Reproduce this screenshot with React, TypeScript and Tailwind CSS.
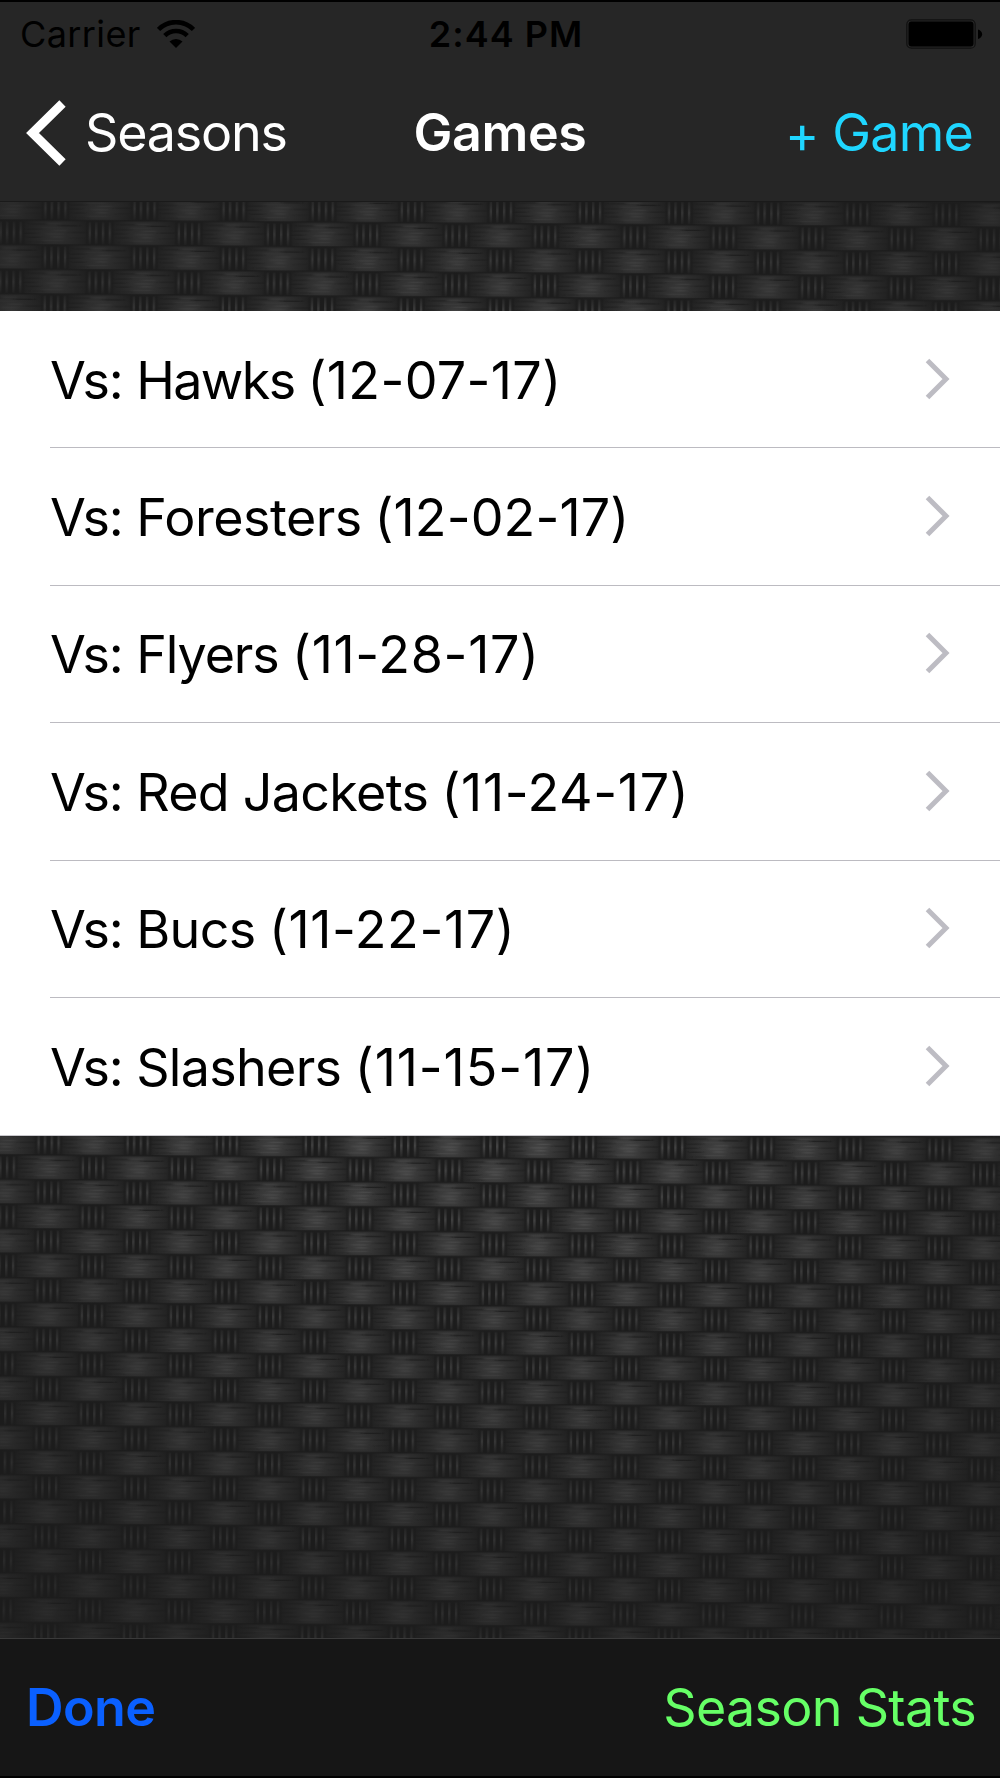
const games = [
  { id: 1, opponent: 'Hawks', date: '12-07-17', nameTracking: 'tracking-[-1.6px]', dateTracking: 'tracking-[0.35px]' },
  { id: 2, opponent: 'Foresters', date: '12-02-17', nameTracking: 'tracking-[-0.5px]', dateTracking: 'tracking-[0.1px]' },
  { id: 3, opponent: 'Flyers', date: '11-28-17', nameTracking: 'tracking-[-1.1px]', dateTracking: 'tracking-[0.7px]' },
  { id: 4, opponent: 'Red Jackets', date: '11-24-17', nameTracking: 'tracking-[-0.7px]', dateTracking: 'tracking-[0.65px]' },
  { id: 5, opponent: 'Bucs', date: '11-22-17', nameTracking: 'tracking-[-0.6px]', dateTracking: 'tracking-[0.6px]' },
  { id: 6, opponent: 'Slashers', date: '11-15-17', nameTracking: 'tracking-[-0.7px]', dateTracking: 'tracking-[0.9px]' },
];

// [dx, dy, length, opacity, light?] of the fibres on one strand
const fibres: [number, number, number, number, boolean][] = [
  [-26, 3, 18, 0.4, false],
  [-8, 2.5, 14, 0.5, true],
  [4, 4.5, 20, 0.7, false],
  [-14, 6.5, 20, 0.4, true],
  [-30, 8, 16, 0.4, false],
  [-2, 9.5, 13, 0.7, true],
  [-34, 12, 16, 0.4, false],
  [14, 11.5, 20, 0.4, false],
  [-8, 13, 16, 0.7, true],
  [-28, 16, 14, 0.4, false],
  [-3, 16, 10, 0.9, true],
  [16, 17, 18, 0.4, false],
  [-12, 19.5, 20, 0.5, true],
  [-24, 21, 12, 0.4, false],
];

function Strand({ x, y }: { x: number; y: number }) {
  return (
    <g transform={`translate(${x} ${y})`}>
      <rect x="-44" y="0.5" width="88" height="24" fill="url(#strand)" />
      <g filter="url(#soften)">
        {fibres.map(([dx, dy, len, opacity, light], i) => (
          <rect key={i} x={dx} y={dy} width={len} height="1.3" fill={light ? '#565656' : '#181818'} opacity={opacity} />
        ))}
      </g>
      <rect x="-34" y="23.6" width="68" height="1.4" fill="#181818" opacity="0.6" />
    </g>
  );
}

function Cross({ x, y }: { x: number; y: number }) {
  return (
    <g transform={`translate(${x} ${y})`}>
      <rect x="-14" y="1" width="28" height="23" fill="#1b1b1b" opacity="0.5" />
      {[-10, -3.6, 3.2, 10].map(dx => (
        <rect key={dx} x={dx - 1.2} y="1.5" width="2.4" height="22" fill="url(#cord)" />
      ))}
    </g>
  );
}

function WovenBackground() {
  return (
    <svg className="absolute inset-0" width="1000" height="1778" viewBox="0 0 1000 1778">
      <defs>
        <filter id="soften" x="-20%" y="-20%" width="140%" height="140%">
          <feGaussianBlur stdDeviation="2 0.6" />
        </filter>
        <radialGradient id="strand" gradientUnits="userSpaceOnUse" cx="0" cy="0" r="1" gradientTransform="translate(0 14) scale(38 30)">
          <stop offset="0" stopColor="#484848" />
          <stop offset="0.4" stopColor="#393939" />
          <stop offset="0.75" stopColor="#2a2a2a" />
          <stop offset="1" stopColor="#1d1d1d" />
        </radialGradient>
        <linearGradient id="cord" x1="0" y1="0" x2="0" y2="1">
          <stop offset="0" stopColor="#292929" />
          <stop offset="0.5" stopColor="#474747" />
          <stop offset="1" stopColor="#252525" />
        </linearGradient>
        <radialGradient id="shade" gradientUnits="userSpaceOnUse" cx="0" cy="0" r="1" gradientTransform="translate(500 840) scale(1000 1000)">
          <stop offset="0" stopColor="#1c1c1c" stopOpacity="0" />
          <stop offset="0.3" stopColor="#1c1c1c" stopOpacity="0.04" />
          <stop offset="0.6" stopColor="#1c1c1c" stopOpacity="0.38" />
          <stop offset="0.8" stopColor="#1c1c1c" stopOpacity="0.62" />
          <stop offset="1" stopColor="#1c1c1c" stopOpacity="0.8" />
        </radialGradient>
        <pattern id="weave" patternUnits="userSpaceOnUse" x="12.4" y="-1.4" width="89.1" height="49.2" patternTransform="rotate(0.42)">
          <rect width="90" height="50" fill="#1d1d1d" />
          <Strand x={0} y={0} />
          <Strand x={89.1} y={0} />
          <Strand x={44.55} y={24.6} />
          <Cross x={44.55} y={0} />
          <Cross x={0} y={24.6} />
          <Cross x={89.1} y={24.6} />
        </pattern>
      </defs>
      <rect width="1000" height="1778" fill="url(#weave)" />
      <rect width="1000" height="1778" fill="url(#shade)" />
    </svg>
  );
}

function StatusBar() {
  return (
    <div className="flex h-[63px] items-center justify-between pl-5 pr-[17px] text-black">
      <div className="flex w-[409px] items-center gap-4">
        <span className="text-[36px] leading-none tracking-[0.4px]">Carrier</span>
        <svg width="38" height="28" viewBox="0 0 38 28" fill="none" stroke="currentColor">
          <path d="M1.5 9.5a24.5 24.5 0 0 1 35 0" strokeWidth="4.6" />
          <path d="M7.8 15.6a16 16 0 0 1 22.4 0" strokeWidth="4.6" />
          <path d="M19 28l-6.5-6.5a9.5 9.5 0 0 1 13 0z" fill="currentColor" stroke="none" />
        </svg>
      </div>
      <span className="shrink-0 whitespace-nowrap text-[36px] font-semibold leading-none tracking-[1px]">2:44 PM</span>
      <div className="flex w-[400px] justify-end">
        <svg width="77" height="30" viewBox="0 0 77 30">
          <rect x="0.8" y="0.8" width="68.4" height="28.4" rx="4.5" fill="none" stroke="#111" strokeWidth="1.2" />
          <rect x="2.5" y="2.5" width="65" height="25" rx="3" />
          <path d="M72 10.5c5.5 1.500 5.500 8 0 9.500z" />
        </svg>
      </div>
    </div>
  );
}

function NavBar() {
  return (
    <div className="flex flex-1 items-center justify-between pb-px pl-[26px] pr-[27px] text-[52px] leading-none text-white">
      <div className="flex w-[341px] items-center gap-[18px]">
        <svg width="41" height="66" viewBox="0 0 41 66" fill="none" stroke="currentColor" strokeWidth="9">
          <path d="M36.500 3.500L6.500 33l30 29.500" />
        </svg>
        <span className="tracking-[-1.2px]">Seasons</span>
      </div>
      <h1 className="font-semibold tracking-[-0.4px]">Games</h1>
      <div className="w-[340px] text-right tracking-[-0.8px] text-[#1fd6ff]">
        <span className="relative top-0.5">+</span> Game
      </div>
    </div>
  );
}

export default function App() {
  return (
    <div className="relative h-[1778px] w-[1000px] overflow-hidden bg-[#1d1d1d] font-['Inter','Liberation_Sans',sans-serif]">
      <WovenBackground />
      <div className="relative flex h-full flex-col">
        <header className="flex h-[202px] flex-col border-b border-t-2 border-b-[#1a1a1a] border-t-black bg-[#262626]">
          <StatusBar />
          <NavBar />
        </header>

        <main className="flex-1 pt-[109px]">
          <ul className="border-b border-[#c8c7cc] bg-white">
            {games.map((game, i) => (
              <li key={game.id} className="flex h-[137.4px] pl-[50px]">
                <div className={`flex flex-1 items-center justify-between pr-[50px] ${i < games.length - 1 ? 'border-b border-[#bcbbc1]' : ''}`}>
                  <div className="whitespace-pre pt-[3px] text-[52px] leading-none text-black">
                    <span className="tracking-[-1.1px]">{'Vs: '}</span>
                    <span className={game.nameTracking}>{game.opponent}</span>
                    <span className={`-ml-0.5 ${game.dateTracking}`}>{` (${game.date})`}</span>
                  </div>
                  <svg width="25" height="42" viewBox="0 0 25 42" fill="none" stroke="#bdbcc3" strokeWidth="5" className="mb-px">
                    <path d="M2.500 2.500L21 21 2.500 39.500" />
                  </svg>
                </div>
              </li>
            ))}
          </ul>
        </main>

        <footer className="flex h-[140px] items-center justify-between border-b-2 border-t border-b-black border-t-[#3a3a3a] bg-[#161616] pl-[26px] pr-6 text-[52px] leading-none">
          <span className="font-semibold tracking-[-0.6px] text-[#0a60ff]">Done</span>
          <span className="tracking-[-0.7px] text-[#66ff66]">Season Stats</span>
        </footer>
      </div>
    </div>
  );
}
